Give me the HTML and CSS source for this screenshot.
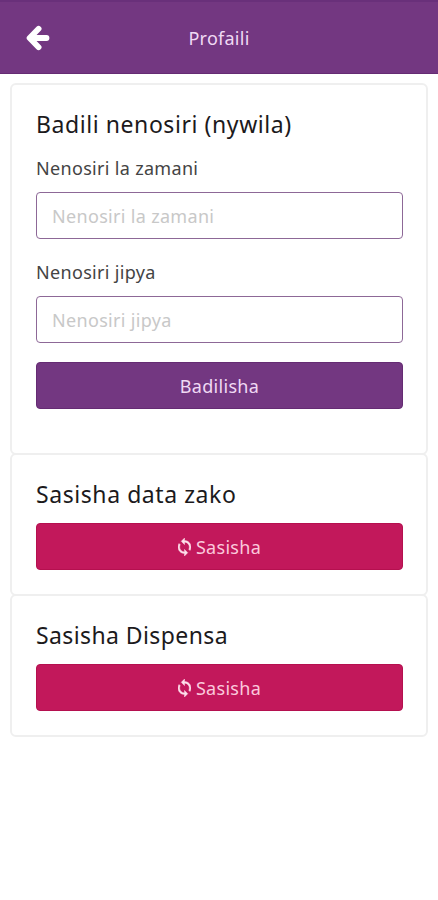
FILE: index.html
```html
<!DOCTYPE html>
<html lang="sw">
<head>
<meta charset="utf-8">
<meta name="viewport" content="width=device-width, initial-scale=1">
<title>Profaili</title>
<link rel="stylesheet" href="styles.css">
</head>
<body>
<svg width="0" height="0" class="sprite" aria-hidden="true">
  <symbol id="sync" viewBox="4 1 16 22">
    <path fill="currentColor" stroke="currentColor" stroke-width=".6" d="M12 4V1L8 5l4 4V6c3.31 0 6 2.69 6 6 0 1.01-.25 1.97-.7 2.8l1.46 1.46A7.93 7.93 0 0 0 20 12c0-4.42-3.58-8-8-8zm0 14c-3.31 0-6-2.69-6-6 0-1.01.25-1.97.7-2.8L5.24 7.74A7.93 7.93 0 0 0 4 12c0 4.42 3.58 8 8 8v3l4-4-4-4v3z"/>
  </symbol>
</svg>
<header class="topbar">
  <a class="back" href="#" aria-label="Rudi">
    <svg width="24" height="26" viewBox="0 0 24 26"><path d="M12.6 3.8 3.6 13l9 9.2M4.5 13H20.5" fill="none" stroke="#fff" stroke-width="5.8" stroke-linecap="round" stroke-linejoin="round"/></svg>
  </a>
  <h1 class="title">Profaili</h1>
</header>
<main class="content">
  <section class="card card-form">
    <h2 class="heading">Badili nenosiri (nywila)</h2>
    <label class="label" for="old">Nenosiri la zamani</label>
    <input class="input" id="old" type="text" placeholder="Nenosiri la zamani">
    <label class="label" for="new">Nenosiri jipya</label>
    <input class="input" id="new" type="text" placeholder="Nenosiri jipya">
    <button class="btn btn-primary">Badilisha</button>
  </section>
  <section class="card">
    <h2 class="heading">Sasisha data zako</h2>
    <button class="btn btn-accent"><svg class="sync" width="13" height="18"><use href="#sync"/></svg>Sasisha</button>
  </section>
  <section class="card">
    <h2 class="heading heading-tight">Sasisha Dispensa</h2>
    <button class="btn btn-accent"><svg class="sync" width="13" height="18"><use href="#sync"/></svg>Sasisha</button>
  </section>
</main>
</body>
</html>
```
FILE: styles.css
```css
* { box-sizing: border-box; }
body {
  min-height: 900px;
  margin: 0;
  background: #fff;
  color: #1c1a1c;
  font-family: "Noto Sans", "Open Sans", sans-serif;
}
.sprite { position: absolute; }
.topbar {
  display: grid;
  grid-template-columns: 76px 1fr 76px;
  align-items: center;
  height: 74px;
  background: #733781;
  border-top: 2px solid #69307a;
  border-bottom: 1px solid #652b73;
}
.back { display: flex; padding-left: 26px; }
.title {
  margin: 0;
  text-align: center;
  font-size: 18px;
  line-height: 24px;
  font-weight: 400;
  letter-spacing: .25px;
  color: #f0d9f4;
}
.content { padding: 9px 10px 0; }
.card {
  height: 143px;
  padding: 24px 23px 0 24px;
  border: 2px solid #efefef;
  border-radius: 6px;
}
.card + .card { margin-top: -2px; }
.card-form { height: 372px; }
.heading {
  margin: 0 0 14px;
  font-size: 23px;
  line-height: 30px;
  font-weight: 400;
  letter-spacing: .57px;
}
.heading-tight { letter-spacing: .4px; }
.card-form .heading { margin-bottom: 18px; }
.label {
  display: block;
  margin: 0 0 13px;
  font-size: 18px;
  line-height: 22px;
  letter-spacing: .32px;
  color: #444;
}
.input {
  display: block;
  width: 100%;
  height: 47px;
  margin: 0 0 22px;
  padding: 0 15px;
  border: 1px solid #8d6897;
  border-radius: 4px;
  background: #fff;
  font: 18px "Noto Sans", "Open Sans", sans-serif;
  letter-spacing: .32px;
}
.input::placeholder { color: #c8c8c8; opacity: 1; }
.btn {
  display: flex;
  align-items: center;
  justify-content: center;
  gap: 5px;
  width: 100%;
  height: 47px;
  padding: 0;
  border: 1px solid;
  border-radius: 4px;
  font: 18px "Noto Sans", "Open Sans", sans-serif;
  letter-spacing: .3px;
}
.card-form .btn { margin-top: -3px; }
.btn-primary { background: #733781; border-color: #652b73; color: #f0d9f4; }
.btn-accent { background: #c2185b; border-color: #b5104f; color: #fbc9dc; }
.sync { overflow: visible; color: #fde0eb; }
```
